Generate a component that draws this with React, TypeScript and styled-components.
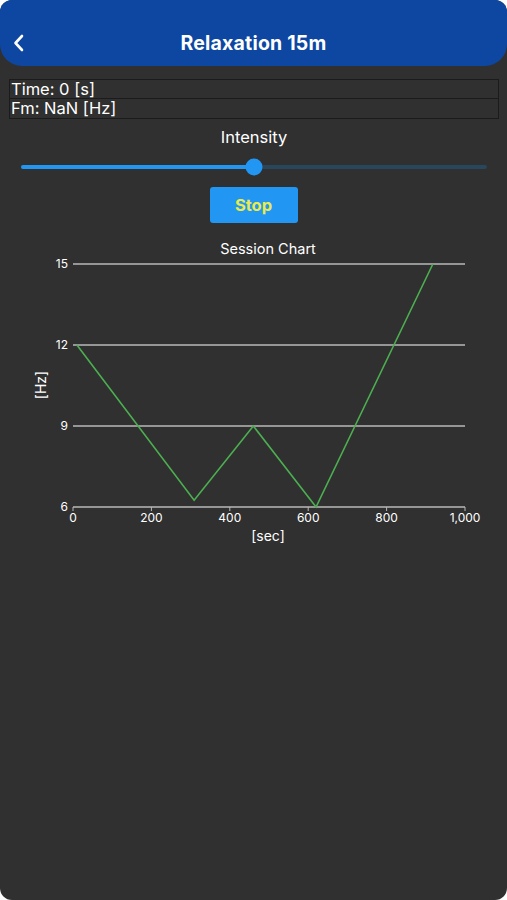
import React from "react";
import styled, {createGlobalStyle} from "styled-components";

const GlobalStyle = createGlobalStyle`
    html, body {
        margin: 0;
        padding: 0;
        background: #ffffff;
    }
    body {
        font-family: "Inter", "Noto Sans", sans-serif;
        -webkit-font-smoothing: antialiased;
    }
`

const chart = {
    left: 73,
    right: 465,
    top: 264,
    bottom: 507,
    yMin: 6,
    yMax: 15,
    xMax: 1000,
}

const session = [
    {t: 10, hz: 12},
    {t: 309, hz: 6.25},
    {t: 460, hz: 9},
    {t: 620, hz: 6},
    {t: 918, hz: 15},
]

const sx = (t: number) => chart.left + (chart.right - chart.left) * t / chart.xMax
const sy = (hz: number) => chart.bottom - (chart.bottom - chart.top) * (hz - chart.yMin) / (chart.yMax - chart.yMin)

const ChevronLeft = () => (
    <svg width="14" height="20" viewBox="0 0 14 20">
        <path d="M10 3 L3.5 10 L10 17" fill="none" stroke="#ffffff" strokeWidth="2.6" strokeLinecap="round" strokeLinejoin="round"/>
    </svg>
)

const SessionChart = () => {
    const yTicks = [6, 9, 12, 15]
    const xTicks = [0, 200, 400, 600, 800, 1000]
    const points = session.map(p => `${sx(p.t)},${sy(p.hz)}`).join(" ")
    return (
        <ChartSvg width="507" height="310" viewBox="0 240 507 310">
            <text x="268" y="254" fill="#ffffff" fontSize="14.5" textAnchor="middle" fontFamily="Inter, sans-serif">Session Chart</text>
            {yTicks.map(v => (
                <g key={v}>
                    <line x1={chart.left} x2={chart.right} y1={sy(v)} y2={sy(v)} stroke="#b8b8b8" strokeWidth="1.5"/>
                    <text x={chart.left - 5} y={sy(v) + 4} fill="#ffffff" fontSize="12" textAnchor="end" fontFamily="Inter, sans-serif">{v}</text>
                </g>
            ))}
            {xTicks.map(v => (
                <g key={v}>
                    <line x1={sx(v)} x2={sx(v)} y1={chart.bottom} y2={chart.bottom + 4} stroke="#b8b8b8" strokeWidth="1"/>
                    <text x={sx(v)} y={chart.bottom + 15} fill="#ffffff" fontSize="12" textAnchor="middle" fontFamily="Inter, sans-serif">{v.toLocaleString("en-US")}</text>
                </g>
            ))}
            <text x="268" y="541" fill="#ffffff" fontSize="14" textAnchor="middle" fontFamily="Inter, sans-serif">[sec]</text>
            <text x="0" y="0" fill="#ffffff" fontSize="14" textAnchor="middle" fontFamily="Inter, sans-serif"
                  transform="translate(46 385) rotate(-90)">[Hz]</text>
            <polyline points={points} fill="none" stroke="#4caf50" strokeWidth="1.6" strokeLinejoin="miter"/>
        </ChartSvg>
    )
}

export default function App() {
    const intensity = 50
    return (
        <>
            <GlobalStyle/>
            <Screen>
                <Header>
                    <BackButton><ChevronLeft/></BackButton>
                    <Title>Relaxation 15m</Title>
                </Header>
                <InfoList>
                    <InfoRow>Time: 0 [s]</InfoRow>
                    <InfoRow>Fm: NaN [Hz]</InfoRow>
                </InfoList>
                <SliderLabel>Intensity</SliderLabel>
                <SliderTrack>
                    <SliderFill style={{width: `${intensity}%`}}/>
                    <SliderThumb style={{left: `${intensity}%`}}/>
                </SliderTrack>
                <StopButton>Stop</StopButton>
                <SessionChart/>
            </Screen>
        </>
    )
}

const Screen = styled.div`
    display: flex;
    flex-direction: column;
    align-items: center;
    width: 507px;
    height: 900px;
    background: #303030;
    border-radius: 12px;
    overflow: hidden;
    color: #ffffff;
`

const Header = styled.header`
    position: relative;
    display: flex;
    align-items: center;
    justify-content: center;
    align-self: stretch;
    height: 66px;
    padding-top: 20px;
    box-sizing: border-box;
    background: #0e47a1;
    border-radius: 0 0 22px 22px;
`

const BackButton = styled.div`
    position: absolute;
    left: 12px;
    top: 33px;
    display: flex;
`

const Title = styled.h1`
    margin: 0;
    font-size: 19.5px;
    font-weight: 700;
    letter-spacing: 0.2px;
`

const InfoList = styled.div`
    display: flex;
    flex-direction: column;
    align-self: stretch;
    margin: 13px 8px 0 9px;
`

const InfoRow = styled.div`
    height: 20px;
    line-height: 19px;
    padding-left: 1px;
    font-size: 16.5px;
    border: 1px solid #1b1b1b;
    box-sizing: border-box;

    & + & {
        border-top: none;
        height: 20px;
    }
`

const SliderLabel = styled.div`
    margin-top: 9px;
    font-size: 16.5px;
    line-height: 18px;
    padding-left: 1px;
`

const SliderTrack = styled.div`
    position: relative;
    align-self: stretch;
    height: 4px;
    margin: 19px 20px 0 21px;
    border-radius: 2px;
    background: #28465c;
`

const SliderFill = styled.div`
    height: 100%;
    border-radius: 2px;
    background: #2196f3;
`

const SliderThumb = styled.div`
    position: absolute;
    top: 50%;
    width: 17px;
    height: 17px;
    border-radius: 50%;
    background: #2196f3;
    transform: translate(-50%, -50%);
`

const StopButton = styled.button`
    margin-top: 18px;
    width: 88px;
    height: 36px;
    border: none;
    border-radius: 3px;
    background: #2196f3;
    color: #eaea4c;
    font-family: "Inter", sans-serif;
    font-size: 16.5px;
    font-weight: 700;
    padding: 0;
`

const ChartSvg = styled.svg`
    display: block;
    margin-top: 17px;
`
